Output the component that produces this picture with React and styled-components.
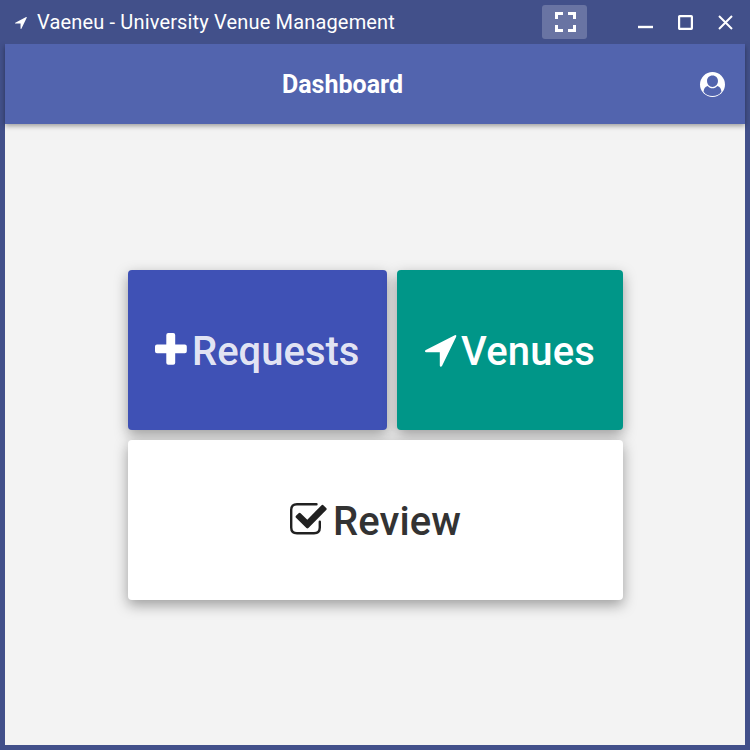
import React from "react";
import styled, { createGlobalStyle } from "styled-components";

const GlobalStyle = createGlobalStyle`
  * { box-sizing: border-box; }
  body { margin: 0; font-family: Roboto, "Liberation Sans", sans-serif; }
`;

const Window = styled.div`
  display: flex;
  flex-direction: column;
  width: 750px;
  height: 750px;
  padding: 0 5px 5px;
  background: #42508a;
  overflow: hidden;
`;

const TitleBar = styled.header`
  display: flex;
  align-items: center;
  height: 44px;
  flex: none;
  z-index: 2;
  padding-left: 10px;
  color: #fff;
  background: #42508a;
`;

const TitleIcon = styled.span`
  padding-top: 2px;
`;

const WindowTitle = styled.span`
  flex: 1;
  margin-left: 10px;
  font-size: 20px;
  line-height: 24px;
  letter-spacing: 0.16px;
  white-space: nowrap;
`;

const TitleButton = styled.button`
  display: flex;
  align-items: center;
  justify-content: center;
  width: 40px;
  height: 34px;
  padding: 0;
  border: 0;
  color: #fff;
  background: none;
`;

const FullscreenButton = styled(TitleButton)`
  width: 45px;
  margin-right: 38px;
  padding-left: 2px;
  border-radius: 3px;
  background: #6974a3;
`;

const AppBar = styled.div`
  display: grid;
  grid-template-columns: 1fr 65px;
  align-items: center;
  height: 80px;
  flex: none;
  z-index: 1;
  color: #fff;
  background: #5264ae;
  box-shadow: 0 2px 5px rgba(0, 0, 0, 0.36);
`;

const Heading = styled.h1`
  margin: 0;
  padding-top: 2px;
  font-size: 25px;
  line-height: 30px;
  font-weight: 700;
  text-align: center;
`;

const AccountButton = styled.button`
  display: flex;
  justify-content: center;
  padding: 0;
  border: 0;
  background: none;
`;

const Content = styled.main`
  display: flex;
  flex: 1;
  justify-content: center;
  padding-top: 146px;
  background: #f3f3f3;
`;

const Tiles = styled.div`
  display: grid;
  grid-template-columns: 259px 226px;
  grid-template-rows: 160px 160px;
  gap: 10px;
  height: 330px;
  margin-left: 1px;
`;

const Tile = styled.button`
  display: flex;
  align-items: center;
  justify-content: flex-start;
  grid-column: ${(p) => (p.$wide ? "1 / -1" : "auto")};
  padding: 0 0 0 ${(p) => p.$inset}px;
  border: 0;
  border-radius: 4px;
  color: ${(p) => p.$color};
  background: ${(p) => p.$background};
  box-shadow: 0 5px 14px rgba(0, 0, 0, 0.36);
  font: 500 40px/50px Roboto, "Liberation Sans", sans-serif;
`;

const TileIcon = styled.span`
  color: ${(p) => p.$color || "inherit"};
  padding-top: ${(p) => p.$drop || 0}px;
  padding-bottom: ${(p) => p.$lift || 0}px;
`;

const TileLabel = styled.span`
  margin-left: ${(p) => p.$gap}px;
  padding-top: 4px;
  letter-spacing: ${(p) => p.$spacing || 0}px;
`;

const Icon = styled.svg`
  display: block;
  flex: none;
  overflow: visible;
`;

const ArrowIcon = ({ size }) => (
  <Icon width={size} height={size} viewBox="0 0 32 32" fill="currentColor">
    <path d="M29.8.3Q31.8-.5 31.2 1.8L17 31Q16.4 32 15.6 31.8Q14.8 31.6 14.8 30.6V17.2H1.2Q.2 17.2 0 16.4Q-.1 15.6.8 15.1Z" />
  </Icon>
);

const PlusIcon = () => (
  <Icon width="32" height="32" viewBox="0 0 32 32" fill="currentColor">
    <path d="M13.3 0H18.2Q20.2 0 20.2 2V11.6H29.8Q31.8 11.6 31.8 13.6V18.2Q31.8 20.2 29.8 20.2H20.2V29.8Q20.2 31.8 18.2 31.8H13.3Q11.3 31.8 11.3 29.8V20.2H2Q0 20.2 0 18.2V13.6Q0 11.6 2 11.6H11.3V2Q11.3 0 13.3 0Z" />
  </Icon>
);

const CheckIcon = () => (
  <Icon width="37" height="32" viewBox="0 0 37 32" fill="none">
    <path d="M26.5 1.2H7Q1.2 1.2 1.2 7V24.5Q1.2 30.2 7 30.2H24Q29.8 30.2 29.8 24.5V18.8" stroke="#212121" strokeWidth="2.4" strokeLinecap="round" />
    <path d="M6 12.8L8.6 10.2Q9.6 9.3 10.6 10.2L17.3 16.8L31.3 2.4Q32.5 1.3 33.6 2.4L36.2 5Q37.2 6 36.2 7.1L18.4 25.1Q17.4 26 16.4 25.1L6 14.7Q5.1 13.7 6 12.8Z" fill="#212121" />
  </Icon>
);

const FullscreenIcon = () => (
  <Icon width="21" height="20" viewBox="0 0 21 20" fill="none" stroke="currentColor" strokeWidth="3">
    <path d="M1.5 7V1.5H8M13 1.5H19.5V7M19.5 13V18.5H13M8 18.5H1.5V13" />
  </Icon>
);

const MinimizeIcon = () => (
  <Icon width="16" height="16" viewBox="0 0 16 16">
    <path d="M1 13H16" stroke="currentColor" strokeWidth="2.4" />
  </Icon>
);

const MaximizeIcon = () => (
  <Icon width="15" height="15" viewBox="0 0 15 15" fill="none">
    <rect x="1.1" y="1.1" width="12.8" height="12.8" rx=".6" stroke="currentColor" strokeWidth="2.2" />
  </Icon>
);

const CloseIcon = () => (
  <Icon width="15" height="15" viewBox="0 0 15 15" fill="none">
    <path d="M1 1L14 14M14 1L1 14" stroke="currentColor" strokeWidth="2" />
  </Icon>
);

const AccountIcon = () => (
  <Icon width="25" height="25" viewBox="0.4 0.4 25.2 25.2">
    <circle cx="13" cy="13" r="12.6" fill="#fff" />
    <path d="M13 4C16.4 4 18.5 6.5 18.5 9.5C18.5 12.8 16.2 15.4 13 15.4C9.8 15.4 7.5 12.8 7.5 9.5C7.5 6.5 9.6 4 13 4ZM8.2 14.4C9.4 15.9 11.1 16.8 13 16.8C14.9 16.8 16.6 15.9 17.8 14.4C20.6 14.9 21.8 17.5 22 20.3C20 23.2 16.6 24.7 13 24.7C9.4 24.7 6 23.2 4 20.3C4.2 17.5 5.4 14.9 8.2 14.4Z" fill="#5264ae" />
  </Icon>
);

export default function App() {
  return (
    <>
      <GlobalStyle />
      <Window>
        <TitleBar>
          <TitleIcon><ArrowIcon size={12} /></TitleIcon>
          <WindowTitle>Vaeneu - University Venue Management</WindowTitle>
          <FullscreenButton aria-label="Full screen"><FullscreenIcon /></FullscreenButton>
          <TitleButton aria-label="Minimize"><MinimizeIcon /></TitleButton>
          <TitleButton aria-label="Maximize"><MaximizeIcon /></TitleButton>
          <TitleButton aria-label="Close"><CloseIcon /></TitleButton>
        </TitleBar>
        <AppBar>
          <Heading>Dashboard</Heading>
          <AccountButton aria-label="Account"><AccountIcon /></AccountButton>
        </AppBar>
        <Content>
          <Tiles>
            <Tile $inset={27} $color="rgba(255,255,255,.87)" $background="#3f51b5">
              <TileIcon $color="#fff" $lift={3}><PlusIcon /></TileIcon>
              <TileLabel $gap={5}>Requests</TileLabel>
            </Tile>
            <Tile $inset={28} $color="#fff" $background="#009688">
              <TileIcon $drop={2}><ArrowIcon size={32} /></TileIcon>
              <TileLabel $gap={4} $spacing={0.2}>Venues</TileLabel>
            </Tile>
            <Tile $wide $inset={162} $color="#333" $background="#fff">
              <TileIcon $lift={3}><CheckIcon /></TileIcon>
              <TileLabel $gap={6} $spacing={0.1}>Review</TileLabel>
            </Tile>
          </Tiles>
        </Content>
      </Window>
    </>
  );
}
